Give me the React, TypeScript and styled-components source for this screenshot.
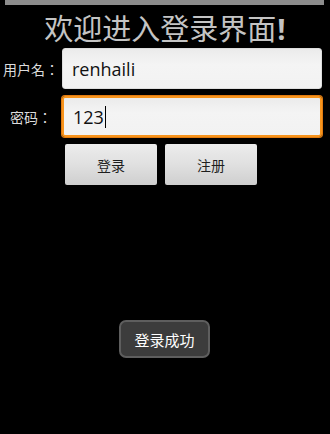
import React from 'react'
import styled, { createGlobalStyle } from 'styled-components'

const GlobalStyle = createGlobalStyle`
  html, body {
    margin: 0;
    padding: 0;
    background: #000;
  }
  * {
    box-sizing: border-box;
  }
`

const Screen = styled.div`
  position: relative;
  width: 330px;
  height: 434px;
  background: #000;
  overflow: hidden;
  font-family: "Noto Sans CJK SC", "Noto Sans", sans-serif;
`

const StatusBar = styled.div`
  height: 5px;
  margin: 0 6px 0 5px;
  background: #8c8c8c;
`

const Title = styled.h1`
  margin: 5px 0 0;
  height: 34px;
  line-height: 34px;
  font-size: 29px;
  font-weight: normal;
  text-align: center;
  color: #c4c4c4;
`

const Bang = styled.span`
  font-family: "Open Sans", "DejaVu Sans", sans-serif;
  font-weight: 700;
  margin-left: 1px;
`

const Row = styled.div<{ $top: number }>`
  display: flex;
  align-items: center;
  margin-top: ${({ $top }) => $top}px;
  padding-right: 8px;
`

const Label = styled.span`
  width: 62px;
  flex: none;
  text-align: center;
  font-family: "Noto Sans CJK TC", "Noto Sans CJK SC", sans-serif;
  font-size: 14px;
  color: #dcdcdc;
`

const Field = styled.div<{ $focused?: boolean }>`
  flex: 1;
  height: 41px;
  display: flex;
  align-items: center;
  padding-left: 9px;
  border-radius: 3px;
  background: linear-gradient(#ebebeb, #f4f4f4 40%, #f2f2f2);
  font-family: "Open Sans", "Noto Sans", sans-serif;
  font-size: 18px;
  color: #111;
  border: ${({ $focused }) => ($focused ? '2px solid #f7941d' : '1px solid #dedede')};
  box-shadow: ${({ $focused }) => ($focused ? '0 0 0 1px #e07a10' : 'none')};
`

const Caret = styled.span`
  display: inline-block;
  width: 1px;
  height: 22px;
  margin-left: 1px;
  background: #000;
`

const Buttons = styled.div`
  display: flex;
  gap: 8px;
  margin: 7px 0 0 65px;
`

const Button = styled.button`
  width: 92px;
  height: 41px;
  padding: 0;
  border: none;
  border-radius: 2px;
  background: linear-gradient(#ececec, #e0e0e0 50%, #cfcfcf);
  font-family: "Noto Sans CJK SC", sans-serif;
  font-size: 14px;
  color: #1e1e1e;
`

const Toast = styled.div`
  position: absolute;
  left: 119px;
  top: 320px;
  width: 91px;
  height: 38px;
  display: flex;
  align-items: center;
  justify-content: center;
  border: 2px solid #5e5e5e;
  border-radius: 7px;
  background: #3c3c3c;
  color: #fff;
  font-size: 15px;
`

export default function App() {
  return (
    <Screen>
      <GlobalStyle />
      <StatusBar />
      <Title>
        欢迎进入登录界面<Bang>!</Bang>
      </Title>
      <Row $top={4}>
        <Label>用户名：</Label>
        <Field>renhaili</Field>
      </Row>
      <Row $top={7}>
        <Label>密码：</Label>
        <Field $focused>
          123
          <Caret />
        </Field>
      </Row>
      <Buttons>
        <Button>登录</Button>
        <Button>注册</Button>
      </Buttons>
      <Toast>登录成功</Toast>
    </Screen>
  )
}
